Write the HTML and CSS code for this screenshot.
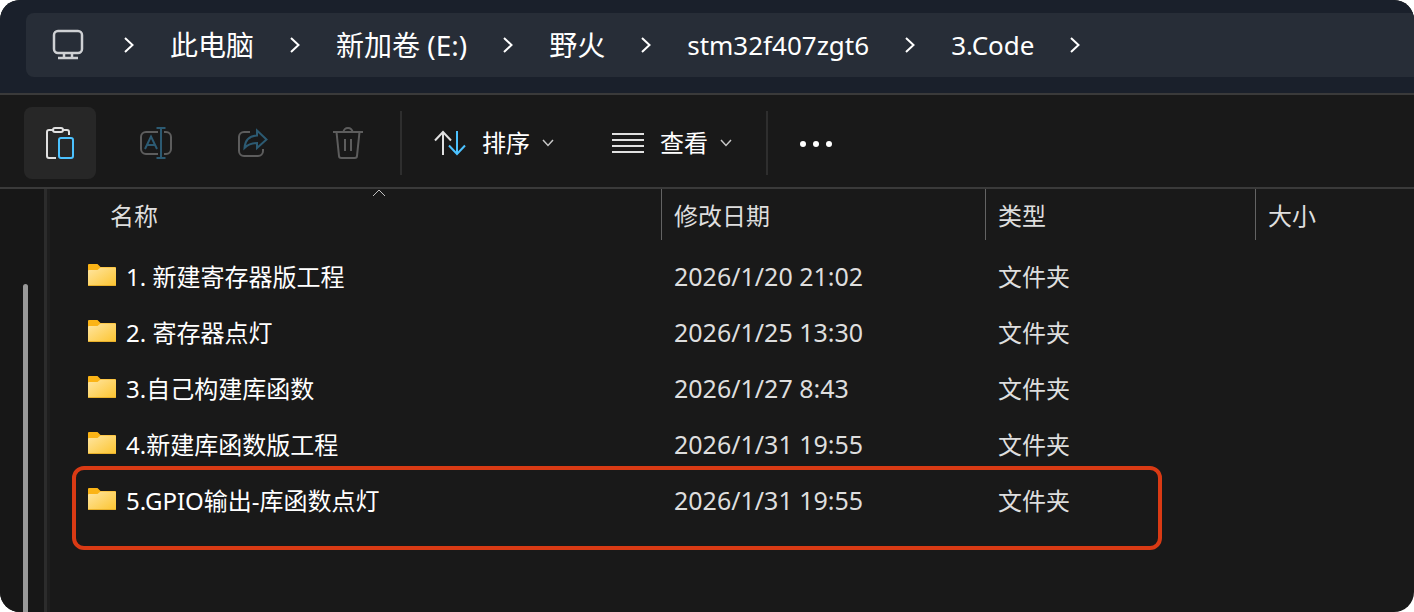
FILE: index.html
```
<!DOCTYPE html>
<html lang="zh-CN">
<head>
    <meta charset="UTF-8">
    <meta name="viewport" content="width=device-width, initial-scale=1.0">
    <title>3.Code</title>
    <link rel="stylesheet" href="styles.css">
</head>
<body>
    <!-- shared icons -->
    <svg class="defs" width="0" height="0" aria-hidden="true">
        <defs>
            <linearGradient id="folder-front" x1="0" y1="0" x2="1" y2="1">
                <stop offset="0" stop-color="#ffe6a2"/>
                <stop offset="1" stop-color="#fcc42f"/>
            </linearGradient>
            <symbol id="chevron" viewBox="0 0 10 16">
                <path d="M1 1l7.500 7L1 15" fill="none" stroke="currentColor" stroke-width="2"/>
            </symbol>
            <symbol id="caret" viewBox="0 0 12 8">
                <path d="M1 1l5 5.500 5-5.500" fill="none" stroke="currentColor" stroke-width="1.500"/>
            </symbol>
            <symbol id="folder" viewBox="0 0 28 22">
                <path d="M0 1a1 1 0 0 1 1-1h8.500l3 3H27a1 1 0 0 1 1 1v6H0z" fill="#fbb416"/>
                <path d="M0 7a1 1 0 0 1 1-1h8.500L12.500 3.500H27a1 1 0 0 1 1 1V21a1 1 0 0 1-1 1H1a1 1 0 0 1-1-1z" fill="url(#folder-front)"/>
                <path d="M0 21h28a1 1 0 0 1-1 1H1a1 1 0 0 1-1-1z" fill="#e9b02a"/>
            </symbol>
        </defs>
    </svg>

    <div class="window">
        <header class="header">
            <nav class="address-bar" aria-label="路径">
                <svg class="icon icon-pc" viewBox="0 0 32 32">
                    <rect x="2" y="2" width="28" height="22" rx="4"/>
                    <path d="M12 24v5M20 24v5M6 29h20"/>
                </svg>
                <svg class="chevron"><use href="#chevron"/></svg>
                <a href="#">此电脑</a>
                <svg class="chevron"><use href="#chevron"/></svg>
                <a href="#">新加卷 (E:)</a>
                <svg class="chevron"><use href="#chevron"/></svg>
                <a href="#">野火</a>
                <svg class="chevron"><use href="#chevron"/></svg>
                <a class="latin" href="#">stm32f407zgt6</a>
                <svg class="chevron"><use href="#chevron"/></svg>
                <a class="latin" href="#">3.Code</a>
                <svg class="chevron"><use href="#chevron"/></svg>
            </nav>
        </header>

        <div class="toolbar">
            <div class="tools">
                <button class="tool active" type="button" aria-label="粘贴">
                    <svg class="icon" viewBox="0 0 32 32">
                        <path d="M9 3H5a2 2 0 0 0-2 2v24a2 2 0 0 0 2 2h7M19 3h4a2 2 0 0 1 2 2v3"/>
                        <rect x="9" y="1" width="10" height="4" rx="2"/>
                        <rect class="blue" x="15" y="11" width="14" height="20" rx="2"/>
                    </svg>
                </button>
                <button class="tool" type="button" aria-label="重命名" disabled>
                    <svg class="icon" viewBox="0 0 32 32">
                        <path d="M18 5H6a5 5 0 0 0-5 5v12a5 5 0 0 0 5 5h12M24 5h2a5 5 0 0 1 5 5v12a5 5 0 0 1-5 5h-2"/>
                        <path class="blue" d="M21 1v30M16.500 1h9M16.500 31h9M5 22L11 9.500 17 22M7.500 18h7"/>
                    </svg>
                </button>
                <button class="tool" type="button" aria-label="共享" disabled>
                    <svg class="icon" viewBox="0 0 32 32">
                        <path d="M14 5H8a5 5 0 0 0-5 5v14a5 5 0 0 0 5 5h14a5 5 0 0 0 5-5v-2"/>
                        <path class="blue" d="M21 3.500l9.500 9-9.500 8.500v-5c-5 0-9 1.500-12.500 5 .5-7.500 5-12 12.500-12.500z"/>
                    </svg>
                </button>
                <button class="tool" type="button" aria-label="删除" disabled>
                    <svg class="icon" viewBox="0 0 32 32">
                        <path d="M1 5h30M11.500 5a4.500 4 0 0 1 9 0M4.500 5l2.500 24a2.500 2 0 0 0 2.500 2h13a2.500 2 0 0 0 2.500-2l2.500-24M13 12v12M19 12v12"/>
                    </svg>
                </button>
            </div>
            <span class="divider"></span>
            <div class="menus">
                <button class="menu" type="button">
                    <svg class="icon" viewBox="0 0 32 32">
                        <path d="M9 28V5M1 13.500L9 5l8 8.500"/>
                        <path class="blue" d="M23 4v23M15 18.500l8 8.500 8-8.500"/>
                    </svg>
                    <span>排序</span>
                    <svg class="caret"><use href="#caret"/></svg>
                </button>
                <button class="menu" type="button">
                    <svg class="icon" viewBox="0 0 32 32">
                        <path d="M0 7h32M0 13h32M0 19h32M0 25h32"/>
                    </svg>
                    <span>查看</span>
                    <svg class="caret"><use href="#caret"/></svg>
                </button>
            </div>
            <span class="divider"></span>
            <button class="menu" type="button" aria-label="更多">
                <svg class="icon icon-more" viewBox="0 0 32 32">
                    <circle cx="3" cy="17" r="3"/>
                    <circle cx="16" cy="17" r="3"/>
                    <circle cx="29" cy="17" r="3"/>
                </svg>
            </button>
        </div>

        <div class="content">
            <aside class="sidebar">
                <div class="scroll-thumb"></div>
            </aside>
            <main class="file-list">
                <table>
                    <colgroup>
                        <col class="col-name">
                        <col class="col-date">
                        <col class="col-type">
                        <col>
                    </colgroup>
                    <thead>
                        <tr>
                            <th><div class="head">名称</div><svg class="sort-mark" viewBox="0 0 14 8"><path d="M1 7l6-6 6 6"/></svg></th>
                            <th><div class="head">修改日期</div></th>
                            <th><div class="head">类型</div></th>
                            <th><div class="head">大小</div></th>
                        </tr>
                    </thead>
                    <tbody>
                        <tr>
                            <td><div class="name"><svg class="folder"><use href="#folder"/></svg>1. 新建寄存器版工程</div></td>
                            <td class="date">2026/1/20 21:02</td>
                            <td>文件夹</td>
                            <td></td>
                        </tr>
                        <tr>
                            <td><div class="name"><svg class="folder"><use href="#folder"/></svg>2. 寄存器点灯</div></td>
                            <td class="date">2026/1/25 13:30</td>
                            <td>文件夹</td>
                            <td></td>
                        </tr>
                        <tr>
                            <td><div class="name"><svg class="folder"><use href="#folder"/></svg>3.自己构建库函数</div></td>
                            <td class="date">2026/1/27 8:43</td>
                            <td>文件夹</td>
                            <td></td>
                        </tr>
                        <tr>
                            <td><div class="name"><svg class="folder"><use href="#folder"/></svg>4.新建库函数版工程</div></td>
                            <td class="date">2026/1/31 19:55</td>
                            <td>文件夹</td>
                            <td></td>
                        </tr>
                        <tr>
                            <td><div class="name"><svg class="folder"><use href="#folder"/></svg>5.GPIO输出-库函数点灯</div></td>
                            <td class="date">2026/1/31 19:55</td>
                            <td>文件夹</td>
                            <td></td>
                        </tr>
                    </tbody>
                </table>
                <div class="highlight"></div>
            </main>
        </div>
    </div>
</body>
</html>
```
FILE: styles.css
```
* {
    box-sizing: border-box;
}

body {
    margin: 0;
    background-color: #fff;
    color: #fff;
    font-family: "Noto Sans", "Noto Sans CJK SC", sans-serif;
    font-size: 24px;
    line-height: 32px;
}

.defs {
    position: absolute;
}

.window {
    display: flex;
    flex-direction: column;
    min-height: 100vh;
    background-color: #191919;
    border-radius: 20px;
    overflow: hidden;
}

/* address bar */
.header {
    padding: 13px 0 16px 26px;
    background-color: #1a202b;
    border-bottom: 2px solid #3a3a3a;
}

.address-bar {
    display: flex;
    align-items: center;
    gap: 36px;
    height: 64px;
    padding-left: 26px;
    background-color: #272d37;
    border-radius: 8px 0 0 8px;
    font-size: 28px;
    white-space: nowrap;
}

.address-bar a {
    color: #fff;
    text-decoration: none;
}

.address-bar .latin {
    font-size: 26px;
}

.chevron {
    flex: none;
    width: 10px;
    height: 16px;
}

.icon {
    flex: none;
    display: block;
    width: 32px;
    height: 32px;
    fill: none;
    stroke: #e0e0e0;
    stroke-width: 2;
}

.icon .blue {
    stroke: #4cc2ff;
}

.icon-pc {
    margin-right: 4px;
    stroke: #cfd1d4;
    stroke-width: 2.5;
}

.icon-more {
    fill: #fff;
    stroke: none;
}

/* toolbar */
.toolbar {
    display: flex;
    align-items: center;
    gap: 16px;
    padding: 12px 24px 8px;
    border-bottom: 2px solid #3a3a3a;
}

.tools {
    display: flex;
    gap: 24px;
}

.menus {
    display: flex;
    gap: 26px;
    padding-right: 2px;
}

button {
    display: flex;
    align-items: center;
    height: 72px;
    border: none;
    border-radius: 8px;
    background: none;
    color: #fff;
    font: inherit;
}

.tool {
    width: 72px;
    padding: 0 20px;
}

.tool.active {
    background-color: #272727;
}

.tool:disabled .icon {
    stroke: #5d5d5d;
}

.tool:disabled .blue {
    stroke: #2c5a72;
}

.menu {
    padding: 0 16px;
}

.menu span {
    margin: 0 12px 0 16px;
}

.caret {
    width: 12px;
    height: 8px;
    color: #c8c8c8;
}

.divider {
    width: 2px;
    height: 64px;
    background-color: #2e2e2e;
}

/* file list */
.content {
    display: flex;
    flex: 1;
}

.sidebar {
    display: flex;
    width: 50px;
    padding: 95px 0 0 23px;
    background: linear-gradient(to right, #171717 44px, #2c2c2c 44px, #2c2c2c 47px, #1e1e1e 47px);
}

.scroll-thumb {
    width: 5px;
    background-color: #999;
    border-radius: 3px 3px 0 0;
}

.file-list {
    position: relative;
    flex: 1;
}

table {
    width: 100%;
    table-layout: fixed;
    border-collapse: collapse;
}

.col-name {
    width: 611px;
}

.col-date {
    width: 324px;
}

.col-type {
    width: 270px;
}

th {
    position: relative;
    height: 60px;
    padding: 0;
    color: #dedede;
    font-weight: 400;
    text-align: left;
    vertical-align: top;
}

.head {
    height: 51px;
    padding: 11px 12px 0;
    border-left: 1px solid #636363;
}

th:first-child .head {
    padding-left: 60px;
    border-left: none;
}

.sort-mark {
    position: absolute;
    top: 0;
    left: 322px;
    width: 14px;
    height: 8px;
    fill: none;
    stroke: #c0c0c0;
}

td {
    height: 56px;
    padding: 0 13px;
    color: #dedede;
    white-space: nowrap;
}

td:first-child {
    padding-left: 38px;
    color: #fff;
}

td.date {
    padding-bottom: 2px;
    font-size: 25px;
}

.name {
    display: flex;
    align-items: center;
    gap: 10px;
}

.folder {
    flex: none;
    width: 28px;
    height: 22px;
    margin-bottom: 4px;
}

.highlight {
    position: absolute;
    top: 277px;
    left: 22px;
    right: 252px;
    height: 84px;
    border: 4px solid #d93a14;
    border-radius: 12px;
}
```
